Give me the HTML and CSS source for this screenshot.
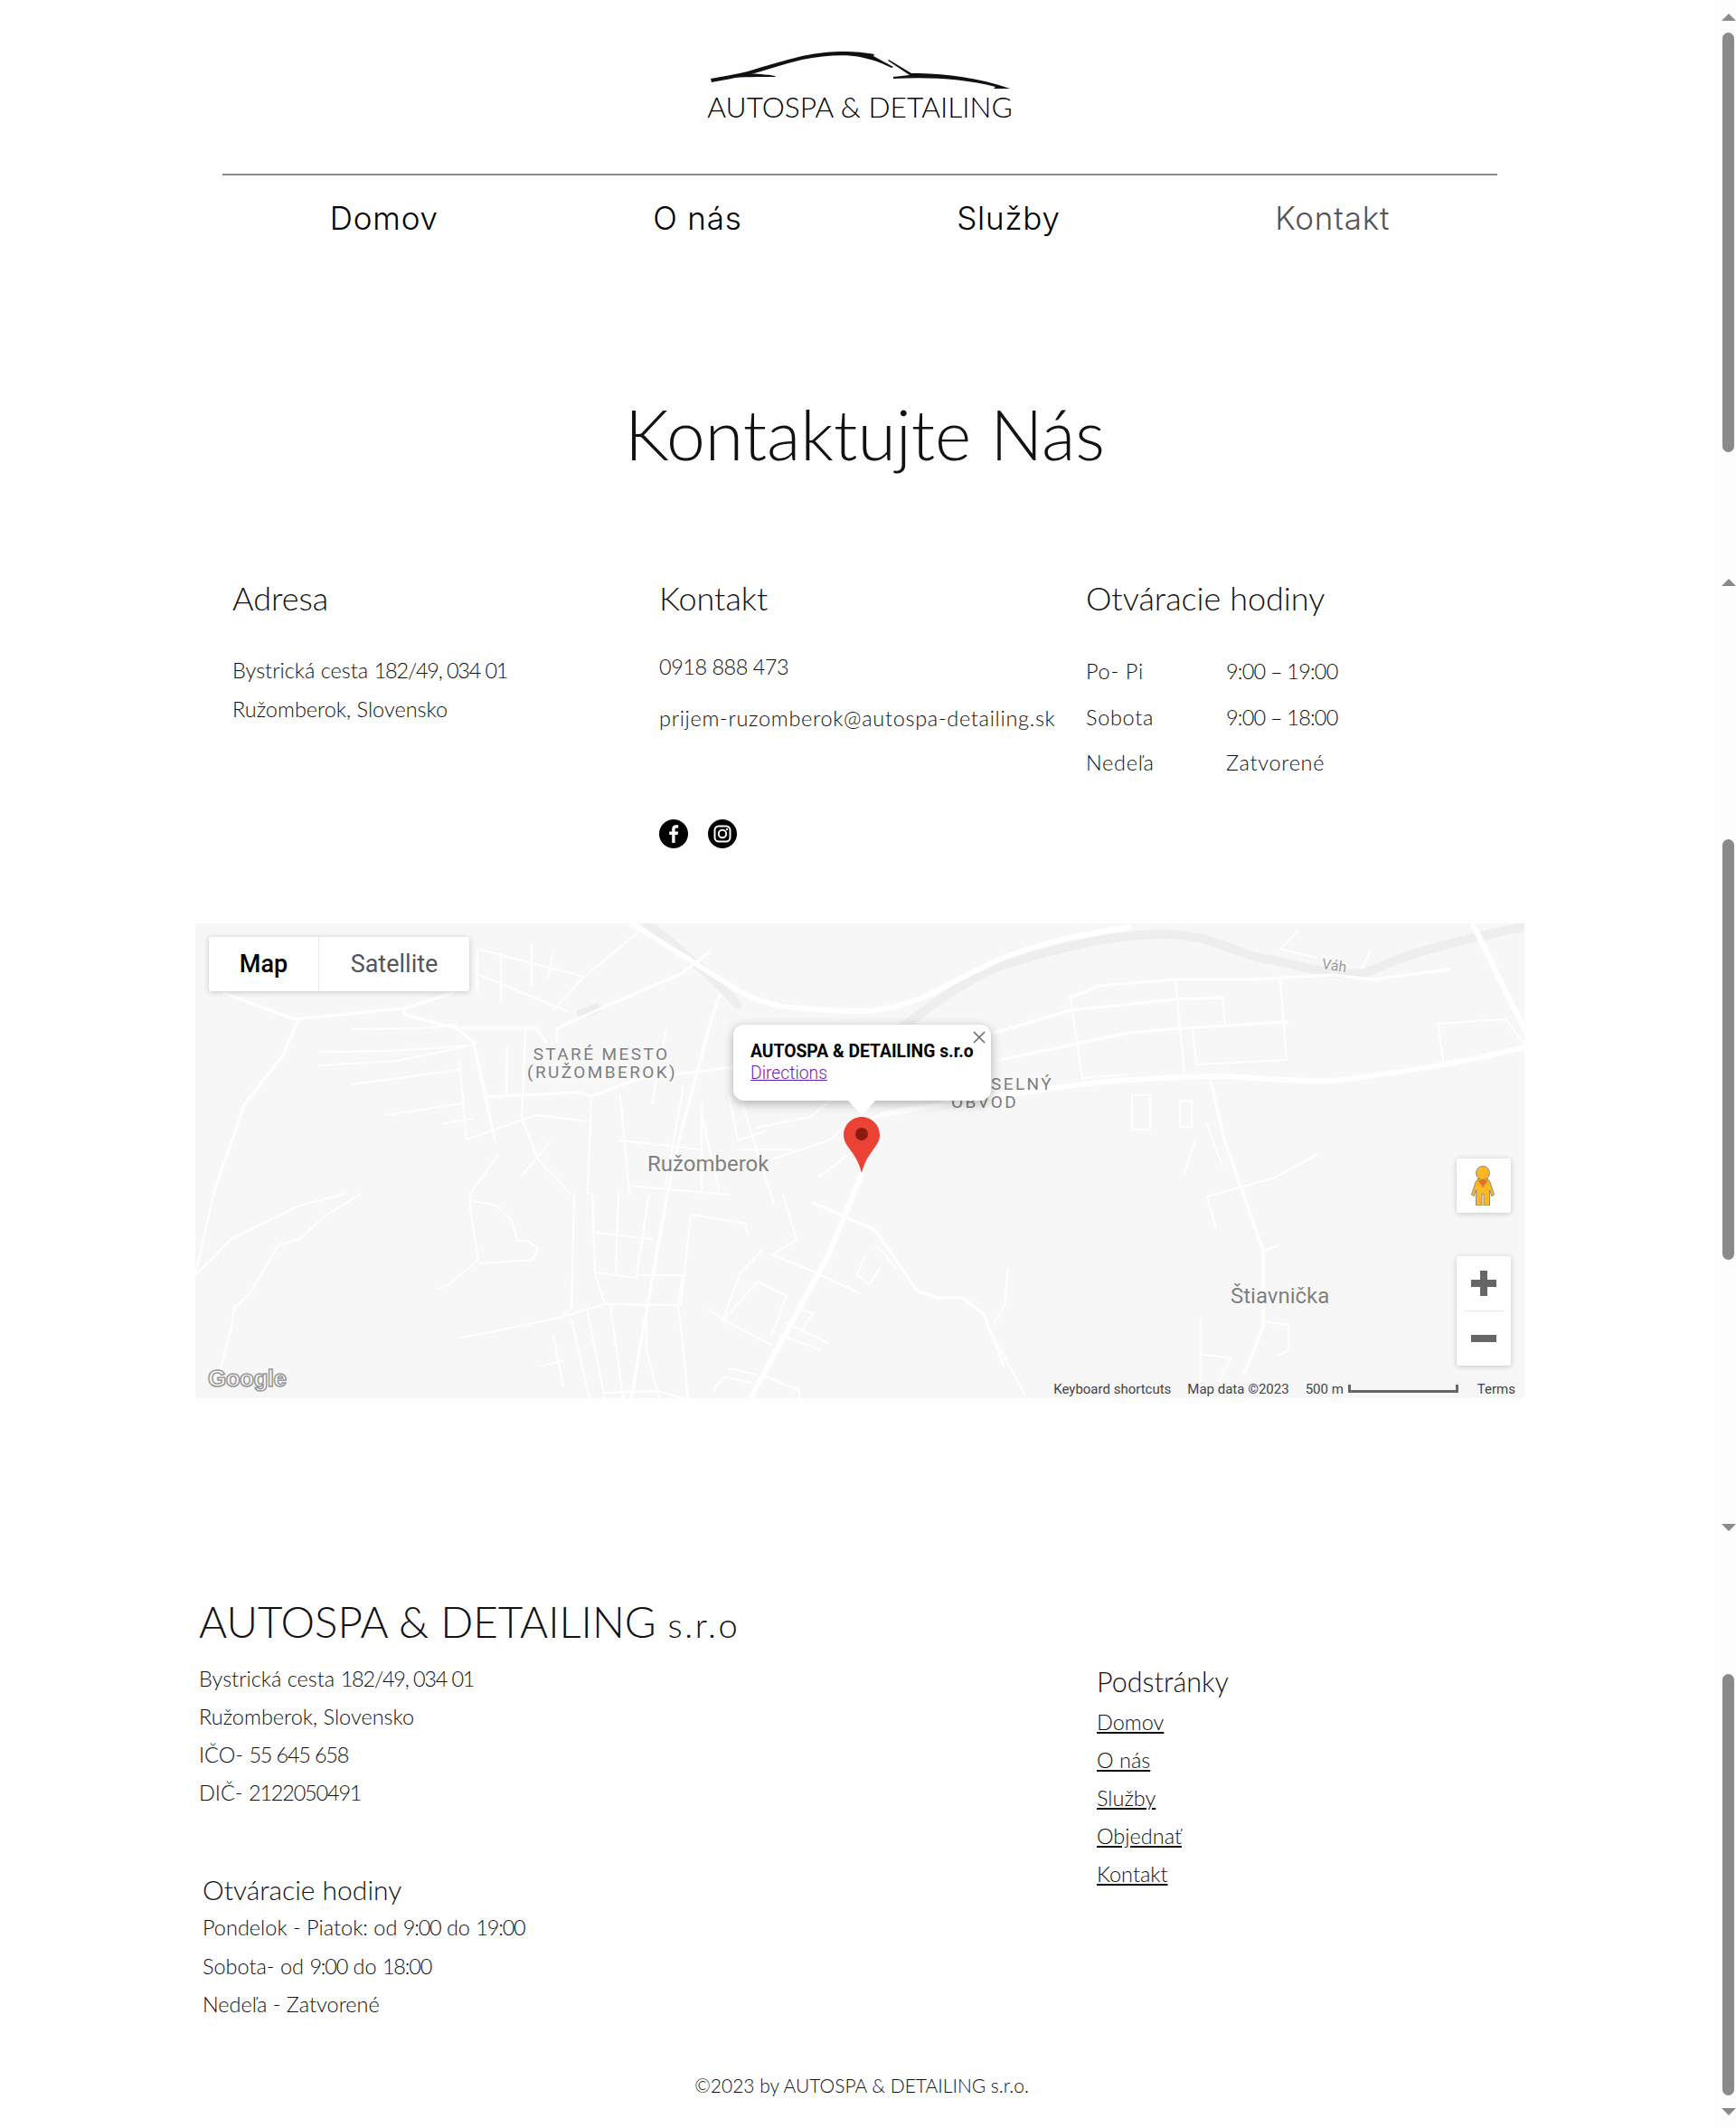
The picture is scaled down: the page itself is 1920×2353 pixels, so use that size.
FILE: index.html
```html
<!DOCTYPE html>
<html lang="sk">
<head>
    <meta charset="UTF-8">
    <meta name="viewport" content="width=device-width, initial-scale=1.0">
    <title>Kontakt | AUTOSPA &amp; DETAILING</title>
    <link rel="stylesheet" href="styles.css">
</head>
<body>
<div class="page">
    <div class="content">
        <header class="header">
            <div class="logo">
                <svg class="logo-car" viewBox="780 50 340 50" width="340" height="50">
                    <path d="M785 87C800 84 815 82 826 79C845 73 865 67 886 62C905 58 920 57 932 57C945 57 955 58 966 60L965 62L987 74L985 75C975 70 965 66 950 63C935 60 910 61 886 66C865 71 845 78 826 83C812 86 798 89 786 91Z"/>
                    <path d="M826 81C840 82 858 83 857 85C840 85 820 85 805 86Z"/>
                    <path d="M982 66L1007 81C1040 81 1078 85 1116 98L1098 98L1100 96C1065 87 1025 85 987 87L987 85L1005 83L981 67Z"/>
                </svg>
                <div class="logo-text">AUTOSPA &amp; DETAILING</div>
            </div>
            <nav class="nav">
                <a href="#">Domov</a>
                <a href="#">O nás</a>
                <a href="#">Služby</a>
                <a href="#" class="active">Kontakt</a>
            </nav>
        </header>

        <h1 class="title">Kontaktujte Nás</h1>

        <section class="info">
            <div class="col">
                <h2>Adresa</h2>
                <div class="address">
                    <p>Bystrická cesta <span class="num">182/49, 034 01</span></p>
                    <p>Ružomberok, Slovensko</p>
                </div>
            </div>
            <div class="col">
                <h2>Kontakt</h2>
                <p class="phone">0918 888 473</p>
                <p class="email">prijem-ruzomberok@autospa-detailing.sk</p>
                <div class="social">
                    <svg viewBox="0 0 32 32" width="32" height="32">
                        <circle cx="16" cy="16" r="16" fill="#000"/>
                        <path d="M17.6 26V17h3l.5-3.6h-3.5v-2.2c0-1 .3-1.7 1.8-1.7h1.8V6.3c-.4 0-1.4-.1-2.6-.1-2.6 0-4.4 1.6-4.4 4.5v2.7h-3V17h3v9z" fill="#fff"/>
                    </svg>
                    <svg viewBox="0 0 32 32" width="32" height="32">
                        <circle cx="16" cy="16" r="16" fill="#000"/>
                        <rect x="7.5" y="7.5" width="17" height="17" rx="4.5" fill="none" stroke="#fff" stroke-width="2"/>
                        <circle cx="16" cy="16" r="4.2" fill="none" stroke="#fff" stroke-width="2"/>
                        <circle cx="21" cy="11" r="1.2" fill="#fff"/>
                    </svg>
                </div>
            </div>
            <div class="col">
                <h2>Otváracie hodiny</h2>
                <div class="hours">
                    <span>Po- Pi</span><span class="num">9:00 – 19:00</span>
                    <span>Sobota</span><span class="num">9:00 – 18:00</span>
                    <span>Nedeľa</span><span>Zatvorené</span>
                </div>
            </div>
        </section>

        <section class="map">
            <svg class="map-roads" viewBox="0 0 1470 525" width="1470" height="525">
                <path class="water" d="M770 125C800 100 860 55 900 44C950 28 1040 5 1097 14C1140 20 1160 38 1194 41C1240 52 1280 62 1303 51C1350 30 1400 18 1470 4"/>
                <path class="water" d="M500 0C530 25 570 55 600 90"/>
                <rect class="park" x="422" y="92" width="26" height="10" transform="rotate(-20 435 97)"/>
                <g class="r5">
                    <path d="M484 1L600 74C625 88 650 94 677 94C700 97 720 97 742 97C765 95 785 90 807 81C840 65 865 50 897 37C940 20 985 12 1032 4"/>
                    <path d="M761 211C820 200 880 192 936 184C1000 174 1060 170 1129 169C1170 170 1215 175 1258 174C1330 165 1400 155 1470 137"/>
                    <path d="M737 277L700 367L614 525"/>
                    <path d="M1413 1L1426 27L1452 81L1481 137"/>
                </g>
                <g class="r3">
                    <path d="M32 77L109 106L231 94L285 77"/>
                    <path d="M231 94V101L289 116H377L388 132"/>
                    <path d="M289 116L308 132L331 239"/>
                    <path d="M319 192L423 187L438 191L491 172L594 159"/>
                    <path d="M400 116L453 92L537 56L568 32"/>
                    <path d="M580 79L568 116L537 232L522 299L482 525"/>
                    <path d="M683 309L752 339L798 406L821 414H849L872 432L894 489"/>
                    <path d="M114 106L97 146L55 199L21 296"/>
                    <path d="M968 82L1000 69L1084 62H1168L1258 57L1303 62L1387 51"/>
                    <path d="M1123 174L1138 239L1181 362V446L1160 499"/>
                    <path d="M761 211L730 222L737 277"/>
                    <path d="M884 121L968 96L1084 84L1136 82"/>
                    <path d="M890 151L1032 121L1090 116L1207 109"/>
                </g>
                <g class="r2">
                    <path d="M138 142C200 142 260 140 308 134"/>
                    <path d="M138 157L224 152L300 136"/>
                    <path d="M174 117L254 116L289 112"/>
                    <path d="M174 178L292 162"/>
                    <path d="M210 212L296 199"/>
                    <path d="M275 221L306 216"/>
                    <path d="M292 152L300 239L377 212L434 219"/>
                    <path d="M365 119L361 216L380 262L415 299"/>
                    <path d="M345 136L344 192"/>
                    <path d="M438 191L434 299L439 299L442 386L453 421L402 436L373 442L327 452L293 458"/>
                    <path d="M335 256L304 299"/>
                    <path d="M361 279L392 242"/>
                    <path d="M315 29L430 59L491 9"/>
                    <path d="M312 56L411 97"/>
                    <path d="M430 59L396 96"/>
                    <path d="M400 116V132"/>
                    <path d="M312 29V75"/>
                    <path d="M338 33V85"/>
                    <path d="M372 24V70"/>
                    <path d="M395 35L390 60"/>
                    <path d="M0 389L40 349L115 312L166 299"/>
                    <path d="M28 492L40 446L43 426L60 409L92 356L115 349L143 324L183 299"/>
                    <path d="M21 296L0 389"/>
                    <path d="M304 299V316L313 372L281 399L270 404"/>
                    <path d="M315 376L373 372L379 359L367 351H356L350 329L333 312L304 306"/>
                    <path d="M502 299L488 389"/>
                    <path d="M453 421L534 422L539 389L488 389"/>
                    <path d="M442 386L488 392"/>
                    <path d="M548 322L608 332L611 344"/>
                    <path d="M548 322L537 422"/>
                    <path d="M442 342L505 349"/>
                    <path d="M468 299L465 389"/>
                    <path d="M419 299L416 426L407 432"/>
                    <path d="M416 439L436 525"/>
                    <path d="M433 426L453 525"/>
                    <path d="M459 422L473 525"/>
                    <path d="M534 422L539 466L545 525"/>
                    <path d="M499 422V472L513 525"/>
                    <path d="M568 427L591 442L637 466"/>
                    <path d="M637 366L677 382L735 409"/>
                    <path d="M654 442L700 464"/>
                    <path d="M648 456L691 471"/>
                    <path d="M666 424L683 432L671 449"/>
                    <path d="M583 439L622 396L654 412L637 456"/>
                    <path d="M626 362L603 386L583 439"/>
                    <path d="M625 499L668 516V525"/>
                    <path d="M574 516L585 501L617 509"/>
                    <path d="M591 492L620 499"/>
                    <path d="M453 519L511 517L539 525"/>
                    <path d="M752 356L763 366L775 382"/>
                    <path d="M740 369L732 389L746 399L757 382"/>
                    <path d="M384 489L407 484"/>
                    <path d="M396 456L407 512"/>
                    <path d="M968 82L981 171L1032 167"/>
                    <path d="M1084 62L1094 167"/>
                    <path d="M1200 64L1207 151L1107 156L1103 117"/>
                    <path d="M1136 82L1139 111"/>
                    <path d="M1374 111L1449 106L1471 134"/>
                    <path d="M1374 111L1381 157"/>
                    <path d="M1119 302L1194 281L1240 256"/>
                    <path d="M1119 302L1129 337"/>
                    <path d="M1181 362L1198 356"/>
                    <path d="M1106 239L1094 276"/>
                    <path d="M884 459L918 522"/>
                    <path d="M899 382L895 422L884 442"/>
                    <path d="M1112 436V505"/>
                    <path d="M1112 476L1145 481L1133 505"/>
                    <path d="M1181 440L1209 444V472L1198 478"/>
                    <path d="M1036 190H1056V228H1036Z"/>
                    <path d="M1089 196H1102V225H1089Z"/>
                    <path d="M1136 268L1118 220"/>
                    <path d="M1220 8L1200 28L1240 38"/>
                    <path d="M1300 30L1290 50"/>
                    <path d="M620 196L640 190"/>
                    <path d="M620 226L680 214L710 190"/>
                    <path d="M640 260L700 240L725 220"/>
                    <path d="M690 280L730 250"/>
                    <path d="M650 300L665 350L640 365"/>
                    <path d="M605 200L640 310"/>
                    <path d="M560 210L580 300"/>
                    <path d="M520 120L505 200"/>
                    <path d="M470 190L480 300"/>
                    <path d="M540 180L520 290"/>
                    <path d="M560 200V300"/>
                    <path d="M590 190L600 240L630 230"/>
                    <path d="M600 250H660"/>
                    <path d="M470 240L560 250"/>
                    <path d="M480 290L590 300"/>
                </g>
            </svg>

            <div class="map-type">
                <div class="map-type-btn active">Map</div>
                <div class="map-type-btn">Satellite</div>
            </div>

            <div class="label district district-old">STARÉ MESTO<br>(RUŽOMBEROK)</div>
            <div class="label district district-ind">SELNÝ<br><span>OBVOD</span></div>
            <div class="label town town-ruzomberok">Ružomberok</div>
            <div class="label town town-stiavnicka">Štiavnička</div>
            <div class="label river">Váh</div>

            <svg class="pin" viewBox="0 0 40 62" width="40" height="62">
                <path d="M20 0C9 0 0 9 0 20C0 33 14 38 20 62C26 38 40 33 40 20C40 9 31 0 20 0Z" fill="#ea4335"/>
                <circle cx="20" cy="19" r="7" fill="#8c1a11"/>
            </svg>

            <div class="popup">
                <div class="popup-title">AUTOSPA &amp; DETAILING s.r.o</div>
                <a href="#" class="popup-link">Directions</a>
                <svg class="popup-close" viewBox="0 0 14 14" width="14" height="14">
                    <path d="M1 1L13 13M13 1L1 13" stroke="#666" stroke-width="1.5"/>
                </svg>
            </div>

            <div class="map-btn pegman">
                <svg viewBox="0 0 26 44" width="26" height="44">
                    <path d="M8 14H18L21 18L25.5 32L23 33.5L20.5 27V44H14V31H12V44H5.5V27L3 33.5L.5 32L5 18Z" fill="#fbb725" stroke="#777" stroke-width=".8"/>
                    <circle cx="13" cy="8" r="7.5" fill="#fbb725" stroke="#777" stroke-width=".8"/>
                    <path d="M7.5 16H18.5L13 24Z" fill="#e5702a"/>
                </svg>
            </div>
            <div class="map-btn zoom">
                <div class="zoom-btn"><span class="zoom-h"></span><span class="zoom-v"></span></div>
                <div class="zoom-line"></div>
                <div class="zoom-btn"><span class="zoom-h"></span></div>
            </div>

            <div class="google">Google</div>

            <div class="attribution">
                <span>Keyboard shortcuts</span>
                <span>Map data ©2023</span>
                <span class="scale">500 m <i class="scale-bar"></i></span>
                <span>Terms</span>
            </div>
        </section>

        <footer class="footer">
            <div class="footer-left">
                <h2 class="footer-name">AUTOSPA &amp; DETAILING <small>s.r.o</small></h2>
                <div class="footer-lines">
                    <p>Bystrická cesta <span class="num">182/49, 034 01</span></p>
                    <p>Ružomberok, Slovensko</p>
                    <p>IČO- <span class="num">55 645 658</span></p>
                    <p>DIČ- <span class="num">2122050491</span></p>
                </div>
                <div class="footer-hours">
                    <h3>Otváracie hodiny</h3>
                    <p>Pondelok - Piatok: od <span class="num">9:00</span> do <span class="num">19:00</span></p>
                    <p>Sobota- od <span class="num">9:00</span> do <span class="num">18:00</span></p>
                    <p>Nedeľa - Zatvorené</p>
                </div>
            </div>
            <div class="footer-right">
                <h3>Podstránky</h3>
                <a href="#">Domov</a>
                <a href="#">O nás</a>
                <a href="#">Služby</a>
                <a href="#">Objednať</a>
                <a href="#">Kontakt</a>
            </div>
        </footer>
        <div class="copyright">©2023 by AUTOSPA &amp; DETAILING s.r.o.</div>
    </div>

    <aside class="scrollbars">
        <div class="arrow-up first"></div>
        <div class="thumb thumb-a"></div>
        <div class="arrow-up second"></div>
        <div class="thumb thumb-b"></div>
        <div class="arrow-down second"></div>
        <div class="thumb thumb-c"></div>
        <div class="arrow-down last"></div>
    </aside>
</div>
</body>
</html>
```

FILE: styles.css
```css
* {
    box-sizing: border-box;
}
html, body {
    margin: 0;
    padding: 0;
    background: #fefefe;
}
body {
    font-family: Lato, "Open Sans", sans-serif;
    font-weight: 300;
    color: #111;
    overflow: hidden;
}
a {
    color: inherit;
}
p, h1, h2, h3 {
    margin: 0;
    font-weight: 300;
}
.num {
    letter-spacing: -1.2px;
}
.page {
    display: flex;
    width: 1920px;
    height: 2353px;
}
.content {
    width: 1903px;
}

/* header */
.header {
    padding-top: 50px;
}
.logo {
    display: flex;
    flex-direction: column;
    align-items: center;
    height: 144px;
    width: 1410px;
    margin-left: 246px;
    border-bottom: 2px solid #8a8a8a;
}
.logo-text {
    margin-top: -1px;
    font-size: 31.7px;
    font-weight: 300;
    line-height: 38px;
    color: #000;
    white-space: nowrap;
}
.logo-car {
    fill: #111;
}
.nav {
    display: flex;
    justify-content: space-around;
    width: 1410px;
    margin-left: 246px;
    padding-top: 25px;
}
.nav a {
    font-family: Inter, sans-serif;
    font-size: 35px;
    line-height: 44px;
    text-decoration: none;
    font-weight: 300;
    color: #000;
    letter-spacing: .8px;
}
.nav a.active {
    color: #555;
}
.title {
    margin: 168px 0 0 10px;
    font-size: 77px;
    line-height: 96px;
    text-align: center;
    color: #111;
}

/* contact columns */
.info {
    display: grid;
    grid-template-columns: 472px 472px 472px;
    margin: 112px 0 0 257px;
    height: 382px;
    font-size: 23.5px;
}
.col h2 {
    font-size: 36px;
    line-height: 44px;
}
.address {
    margin-top: 37px;
    line-height: 42.5px;
}
.phone {
    line-height: 30px;
    margin-top: 39px;
    letter-spacing: -.5px;
}
.email {
    line-height: 30px;
    margin-top: 27px;
    letter-spacing: .7px;
    white-space: nowrap;
}
.social {
    display: flex;
    gap: 22px;
    margin-top: 97px;
}
.hours {
    display: grid;
    grid-template-columns: 155px 1fr;
    grid-auto-rows: 50.5px;
    margin-top: 44px;
    line-height: 30px;
    letter-spacing: .7px;
}
.hours .num {
    letter-spacing: -.8px;
}

/* map */
.map {
    position: relative;
    width: 1470px;
    height: 525px;
    margin-left: 216px;
    background: #f7f7f7;
    overflow: hidden;
    font-family: Roboto, sans-serif;
    font-weight: 400;
}
.map-roads {
    display: block;
}
.map-roads path {
    fill: none;
    stroke: #fff;
    stroke-linejoin: round;
    stroke-linecap: round;
}
.map-roads .water {
    stroke: #eeeeee;
    stroke-width: 10;
}
.map-roads .park {
    fill: #ececec;
}
.r5 path {
    stroke-width: 6;
}
.r3 path {
    stroke-width: 3;
}
.r2 path {
    stroke-width: 2;
}
.map-type {
    position: absolute;
    left: 15px;
    top: 15px;
    display: flex;
    height: 60px;
    background: #fff;
    border-radius: 3px;
    box-shadow: 0 1px 6px rgba(0, 0, 0, .2);
}
.map-type-btn {
    font-size: 27px;
    line-height: 60px;
    text-align: center;
    width: 166px;
    color: #565656;
}
.map-type-btn.active {
    width: 122px;
    font-weight: 500;
    color: #000;
    border-right: 1px solid #eaeaea;
}
.label {
    position: absolute;
    color: #808080;
    white-space: nowrap;
    text-shadow: 0 0 3px #fff;
}
.district {
    font-size: 19px;
    line-height: 19.5px;
    letter-spacing: 2.4px;
    font-weight: 400;
    color: #7d7d7d;
    text-align: center;
}
.district-old {
    left: 367px;
    top: 135px;
    width: 164px;
}
.district-ind {
    left: 880px;
    top: 168px;
    text-align: left;
}
.district-ind span {
    margin-left: -44px;
}
.town {
    font-size: 24px;
    line-height: 28px;
}
.town-ruzomberok {
    left: 500px;
    top: 252px;
}
.town-stiavnicka {
    left: 1145px;
    top: 398px;
}
.river {
    left: 1246px;
    top: 37px;
    font-size: 16px;
    line-height: 20px;
    color: #999;
    transform: rotate(8deg);
}
.pin {
    position: absolute;
    left: 717px;
    top: 214px;
}
.popup {
    position: absolute;
    left: 595px;
    top: 112px;
    width: 285px;
    height: 84px;
    padding: 18px 0 0 19px;
    background: #fff;
    border-radius: 12px;
    box-shadow: 0 3px 12px rgba(0, 0, 0, .3);
    font-size: 19.3px;
}
.popup::after {
    content: "";
    position: absolute;
    left: 126px;
    bottom: -16px;
    border-left: 16px solid transparent;
    border-right: 16px solid transparent;
    border-top: 17px solid #fff;
}
.popup-title {
    font-weight: 700;
    color: #000;
    line-height: 24px;
    white-space: nowrap;
}
.popup-link {
    display: block;
    width: max-content;
    font-weight: 300;
    line-height: 24px;
    color: #6a1fb0;
}
.popup-close {
    position: absolute;
    right: 6px;
    top: 7px;
}
.map-btn {
    position: absolute;
    left: 1395px;
    width: 60px;
    background: #fff;
    border-radius: 3px;
    box-shadow: 0 1px 6px rgba(0, 0, 0, .2);
}
.pegman {
    top: 260px;
    height: 60px;
    display: flex;
    align-items: center;
    justify-content: center;
}
.pegman svg {
    margin-left: -2px;
}
.zoom {
    top: 368px;
    height: 121px;
}
.zoom-btn {
    position: relative;
    height: 60px;
}
.zoom-line {
    height: 1px;
    margin: 0 8px;
    background: #e6e6e6;
}
.zoom-h, .zoom-v {
    position: absolute;
    background: #666;
}
.zoom-h {
    left: 16px;
    top: 26px;
    width: 28px;
    height: 8px;
}
.zoom-v {
    left: 26px;
    top: 16px;
    width: 8px;
    height: 28px;
}
.google {
    position: absolute;
    left: 14px;
    top: 485px;
    font-family: "Liberation Sans", sans-serif;
    font-size: 26px;
    font-weight: 700;
    line-height: 36px;
    letter-spacing: -.5px;
    color: #fff;
    -webkit-text-stroke: 1.6px #999;
}
.attribution {
    position: absolute;
    right: 10px;
    bottom: 0;
    display: flex;
    gap: 18px;
    height: 20px;
    font-size: 15px;
    line-height: 20px;
    color: #444;
    white-space: nowrap;
}
.scale {
    display: flex;
    gap: 5px;
    margin-right: 3px;
}
.scale-bar {
    width: 122px;
    height: 9px;
    margin-top: 5px;
    border: 3px solid #666;
    border-top: 0;
}

/* footer */
.footer {
    display: flex;
    font-size: 23.5px;
}
.footer-left {
    width: 1213px;
    padding: 218px 0 0 220px;
}
.footer-name {
    font-size: 47.5px;
    line-height: 58px;
    white-space: nowrap;
}
.footer-name small {
    font-size: 38px;
    letter-spacing: 2.5px;
}
.footer-lines {
    margin-top: 10px;
}
.footer-lines p {
    line-height: 42px;
}
.footer-hours {
    margin: 66px 0 0 4px;
}
.footer-hours h3, .footer-right h3 {
    line-height: 40px;
}
.footer-hours h3 {
    font-size: 30px;
}
.footer-right h3 {
    font-size: 30.5px;
    margin-bottom: 4px;
}
.footer-hours p {
    line-height: 42.5px;
}
.footer-hours p:first-of-type {
    margin-top: 1px;
}
.footer-right {
    display: flex;
    flex-direction: column;
    align-items: flex-start;
    padding: 293px 0 0 0;
    line-height: 42px;
}
.copyright {
    padding: 54px 0 0 3px;
    font-size: 21px;
    line-height: 28px;
    text-align: center;
}

/* stacked scrollbars at the right edge */
.scrollbars {
    display: flex;
    flex-direction: column;
    align-items: center;
    width: 17px;
    background: #fdfdfd;
}
.thumb {
    width: 13px;
    flex: none;
    background: #8a8a8a;
    border-radius: 7px;
}
.arrow-up, .arrow-down {
    flex: none;
    width: 0;
    height: 0;
    border-left: 8px solid transparent;
    border-right: 8px solid transparent;
}
.arrow-up {
    border-bottom: 8px solid #8a8a8a;
}
.arrow-down {
    border-top: 8px solid #8a8a8a;
}
.arrow-up.first {
    margin-top: 15px;
}
.thumb-a {
    margin-top: 13px;
    height: 464px;
}
.arrow-up.second {
    margin-top: 140px;
}
.thumb-b {
    margin-top: 280px;
    height: 465px;
}
.arrow-down.second {
    margin-top: 292px;
}
.thumb-c {
    margin-top: 158px;
    height: 466px;
}
.arrow-down.last {
    margin-top: 14px;
}
```
